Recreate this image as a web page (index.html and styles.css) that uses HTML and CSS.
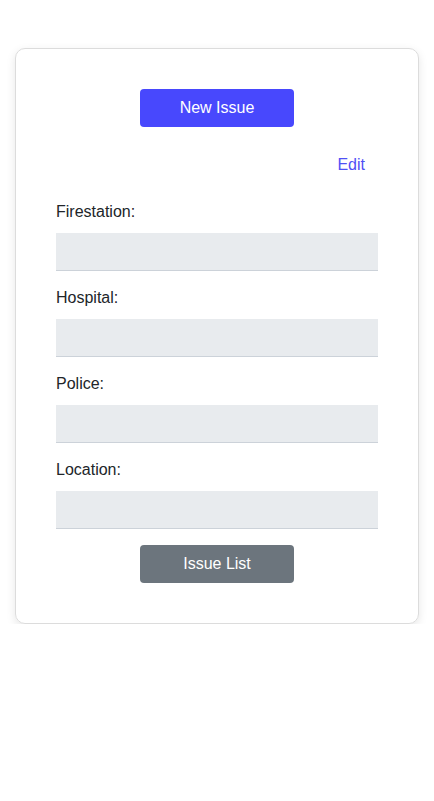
FILE: index.html
```html
<!DOCTYPE html>
<html>
<head>
<meta charset="utf-8">
<link rel="stylesheet" href="styles.css">
</head>
<body>
<div class="card">
  <div class="top">
    <button class="btn btn-primary">New Issue</button>
  </div>
  <div class="edit-row"><a class="edit">Edit</a></div>
  <div class="field">
    <label>Firestation:</label>
    <div class="input"></div>
  </div>
  <div class="field">
    <label>Hospital:</label>
    <div class="input"></div>
  </div>
  <div class="field">
    <label>Police:</label>
    <div class="input"></div>
  </div>
  <div class="field">
    <label>Location:</label>
    <div class="input"></div>
  </div>
  <div class="bottom">
    <button class="btn btn-secondary">Issue List</button>
  </div>
</div>
</body>
</html>
```

FILE: styles.css
```css
html, body {
  margin: 0;
  padding: 0;
  background: #fff;
  font-family: "Liberation Sans", Arial, sans-serif;
  font-size: 16px;
  color: #212529;
}
.card {
  margin: 48px 15px 0 15px;
  border: 1px solid #dcdcdc;
  border-radius: 10px;
  box-shadow: 0 3px 10px rgba(0,0,0,0.10);
  padding: 40px 40px 40px 40px;
  display: flex;
  flex-direction: column;
}
.top, .bottom {
  display: flex;
  justify-content: center;
}
.btn {
  width: 154px;
  height: 38px;
  border: none;
  border-radius: 4px;
  color: #fff;
  font-family: "Liberation Sans", Arial, sans-serif;
  font-size: 16px;
  padding: 0;
}
.btn-primary { background: #4848fd; }
.btn-secondary { background: #6c757d; }
.edit-row {
  display: flex;
  justify-content: flex-end;
  margin-top: 26px;
  padding-right: 13px;
  line-height: 24px;
}
.edit {
  color: #5050f5;
}
.field {
  display: flex;
  flex-direction: column;
}
.edit-row + .field { margin-top: 23px; }
.field + .field { margin-top: 15px; }
.field label {
  line-height: 24px;
  margin-bottom: 9px;
}
.input {
  height: 37px;
  background: #e8ebee;
  border-bottom: 1px solid #ccd2d9;
}
.bottom { margin-top: 16px; }
```
